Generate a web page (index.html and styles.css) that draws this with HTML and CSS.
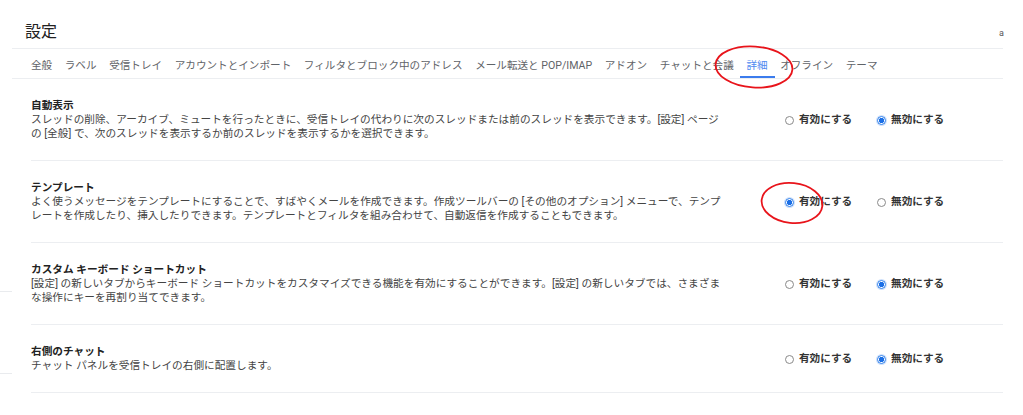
FILE: index.html
```html
<!DOCTYPE html>
<html lang="ja">
<head>
<meta charset="utf-8">
<title>設定</title>
<link rel="stylesheet" href="styles.css">
</head>
<body>
<div class="page">
  <aside class="side">
    <div class="side-block side-a"></div>
    <div class="side-block side-b"></div>
  </aside>
  <main class="main">
    <header class="head">
      <h1 class="title">設定</h1>
      <span class="corner">a</span>
    </header>
    <nav class="tabs">
      <span class="tab">全般</span>
      <span class="tab">ラベル</span>
      <span class="tab">受信トレイ</span>
      <span class="tab">アカウントとインポート</span>
      <span class="tab">フィルタとブロック中のアドレス</span>
      <span class="tab">メール転送と POP/IMAP</span>
      <span class="tab">アドオン</span>
      <span class="tab">チャットと会議</span>
      <span class="tab active">詳細</span>
      <span class="tab">オフライン</span>
      <span class="tab">テーマ</span>
    </nav>
    <section class="rows">
      <div class="row">
        <div class="desc">
          <div class="name">自動表示</div>
          <div class="text">スレッドの削除、アーカイブ、ミュートを行ったときに、受信トレイの代わりに次のスレッドまたは前のスレッドを表示できます。[設定] ページ<br>の [全般] で、次のスレッドを表示するか前のスレッドを表示するかを選択できます。</div>
        </div>
        <div class="opts">
          <label class="opt"><span class="radio"></span>有効にする</label>
          <label class="opt"><span class="radio on"></span>無効にする</label>
        </div>
      </div>
      <div class="row">
        <div class="desc">
          <div class="name">テンプレート</div>
          <div class="text">よく使うメッセージをテンプレートにすることで、すばやくメールを作成できます。作成ツールバーの [その他のオプション] メニューで、テンプ<br>レートを作成したり、挿入したりできます。テンプレートとフィルタを組み合わせて、自動返信を作成することもできます。</div>
        </div>
        <div class="opts">
          <label class="opt"><span class="radio on"></span>有効にする</label>
          <label class="opt"><span class="radio"></span>無効にする</label>
        </div>
      </div>
      <div class="row">
        <div class="desc">
          <div class="name">カスタム キーボード ショートカット</div>
          <div class="text">[設定] の新しいタブからキーボード ショートカットをカスタマイズできる機能を有効にすることができます。[設定] の新しいタブでは、さまざま<br>な操作にキーを再割り当てできます。</div>
        </div>
        <div class="opts">
          <label class="opt"><span class="radio"></span>有効にする</label>
          <label class="opt"><span class="radio on"></span>無効にする</label>
        </div>
      </div>
      <div class="row">
        <div class="desc">
          <div class="name">右側のチャット</div>
          <div class="text">チャット パネルを受信トレイの右側に配置します。</div>
        </div>
        <div class="opts">
          <label class="opt"><span class="radio"></span>有効にする</label>
          <label class="opt"><span class="radio on"></span>無効にする</label>
        </div>
      </div>
    </section>
  </main>
</div>
<svg class="mark mark-tab" width="84" height="48" viewBox="0 0 84 48"><ellipse cx="42" cy="24" rx="38.5" ry="20.5" transform="rotate(4 42 24)" fill="none" stroke="#e8141b" stroke-width="1.8"/></svg>
<svg class="mark mark-radio" width="68" height="48" viewBox="0 0 68 48"><ellipse cx="34" cy="24" rx="30.5" ry="20" transform="rotate(6 34 24)" fill="none" stroke="#e8141b" stroke-width="1.8"/></svg>
</body>
</html>
```

FILE: styles.css
```css
* { box-sizing: border-box; }
html, body { margin: 0; padding: 0; background: #fff; }
body {
  font-family: Roboto, "Noto Sans CJK JP", "Noto Sans", sans-serif;
  color: #444;
  width: 1023px;
  height: 415px;
  overflow: hidden;
  position: relative;
}
.page { display: flex; }
.side { width: 12px; flex: none; display: flex; flex-direction: column; }
.side-block { border-bottom: 1px solid #e9ebee; }
.side-a { height: 292px; }
.side-b { height: 82px; }

.main { width: 991px; flex: none; }
.head {
  height: 49px;
  border-bottom: 1px solid #eceef1;
  display: flex;
  align-items: flex-start;
  justify-content: space-between;
  padding: 22px 0 0 13px;
}
.title {
  margin: 0;
  font-size: 16px;
  font-weight: 400;
  line-height: 20px;
  color: #222;
}
.corner {
  font-size: 9px;
  line-height: 12px;
  margin-top: 5px;
  margin-right: -1px;
  color: #555;
}
.tabs {
  height: 30px;
  border-bottom: 1px solid #eceef1;
  display: flex;
  gap: 12.6px;
  padding-left: 19px;
  align-items: stretch;
}
.tab {
  font-size: 10.6px;
  line-height: 14px;
  color: #5f6368;
  padding-top: 10px;
  white-space: nowrap;
  position: relative;
}
.tab.active { color: #4f8af0; }
.tab.active::after {
  content: "";
  position: absolute;
  left: -6px;
  right: -7px;
  bottom: 0;
  height: 2px;
  background: #3b7ced;
}
.rows { padding-left: 19px; }
.row {
  display: flex;
  align-items: center;
  padding: 20px 0 19px;
  border-bottom: 1px solid #eceef1;
}
.desc { width: 690px; flex: none; }
.name {
  font-size: 10.66px;
  line-height: 14px;
  font-weight: 700;
  color: #222;
}
.text {
  font-size: 10.66px;
  line-height: 14px;
  color: #444;
  white-space: nowrap;
}
.opts {
  display: flex;
  gap: 25px;
  padding-left: 64px;
}
.opt {
  display: flex;
  align-items: center;
  gap: 5px;
  font-size: 10.6px;
  line-height: 14px;
  font-weight: 700;
  color: #333;
}
.radio {
  width: 9px;
  height: 9px;
  border-radius: 50%;
  border: 1px solid #8a8a8a;
  background: #fff;
  flex: none;
}
.radio.on {
  border-color: #2b7de9;
  background: radial-gradient(circle, #1b6fe6 0 2.6px, #fff 2.9px);
  box-shadow: 0 0 0 1px #cfe1fb;
}
.mark { position: absolute; pointer-events: none; }
.mark-tab { left: 712px; top: 43px; }
.mark-radio { left: 758px; top: 179px; }
```
